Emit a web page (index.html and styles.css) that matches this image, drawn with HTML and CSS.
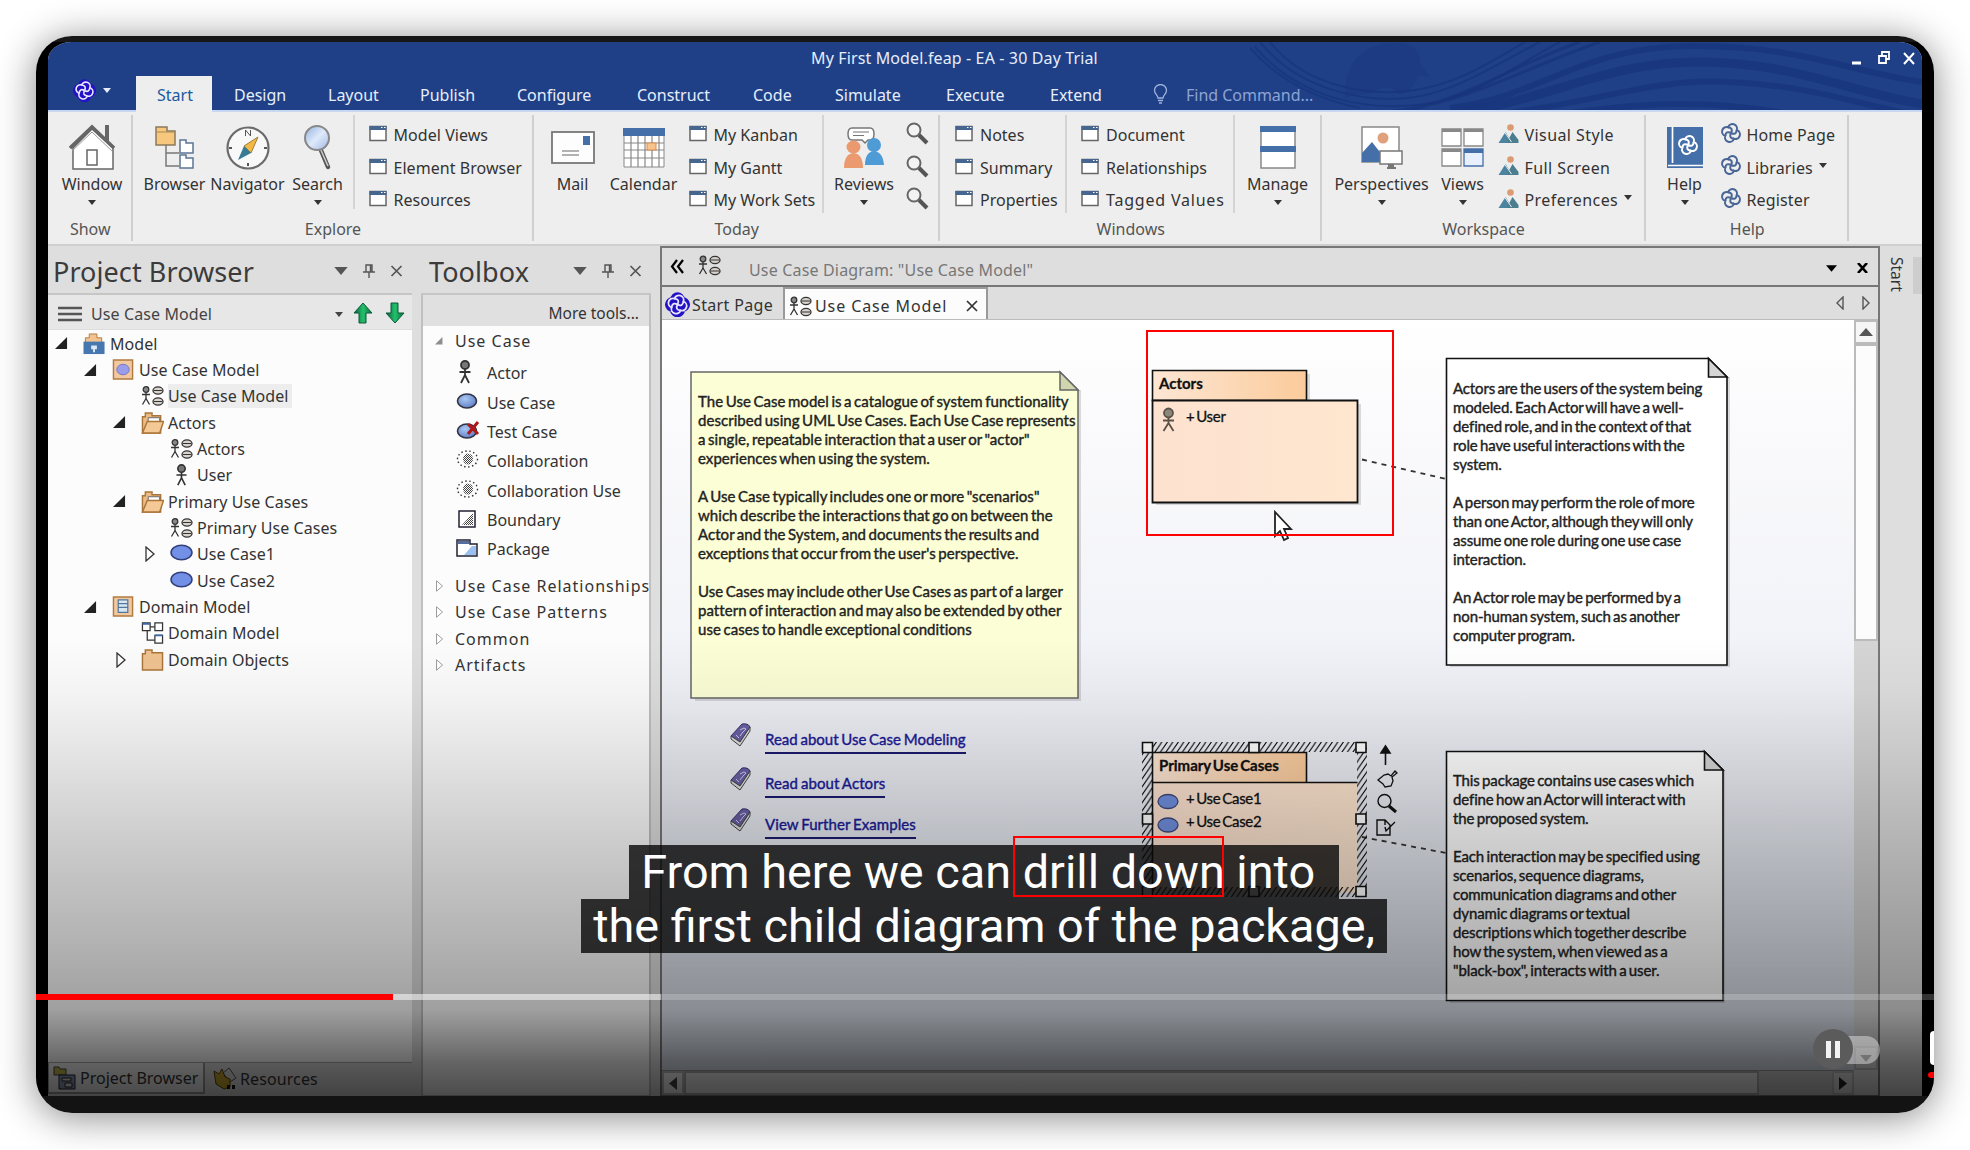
FILE: index.html
```html
<!DOCTYPE html>
<html lang="en">
<head>
<meta charset="utf-8">
<title>My First Model.feap - EA - 30 Day Trial</title>
<link rel="stylesheet" href="styles.css">
</head>
<body>
<svg class="defs" width="0" height="0">
  <defs>
    <linearGradient id="lens" x1="0" y1="0" x2="1" y2="1"><stop offset="0" stop-color="#8fb0e0"/><stop offset=".5" stop-color="#dfeafa"/><stop offset="1" stop-color="#9db8e4"/></linearGradient>
    <linearGradient id="green" x1="0" x2="1"><stop offset="0" stop-color="#0a5a3c"/><stop offset=".5" stop-color="#22c26a"/><stop offset="1" stop-color="#0b6b3c"/></linearGradient>
    <radialGradient id="ball" cx=".4" cy=".35" r=".7"><stop offset="0" stop-color="#a9c8f2"/><stop offset="1" stop-color="#5f7cc6"/></radialGradient>
    <linearGradient id="tabfill" x1="0" x2="1"><stop offset="0" stop-color="#fde6d4"/><stop offset="1" stop-color="#fbcb9b"/></linearGradient>
    <linearGradient id="bodyfill" x1="0" x2="1"><stop offset="0" stop-color="#fde2d0"/><stop offset="1" stop-color="#fee6cf"/></linearGradient>
    <pattern id="hatch" width="5.500" height="8" patternUnits="userSpaceOnUse"><path d="M0 8L5.500 0M-1 1.450L1-1.450M4.500 9.450L6.500 6.550" stroke="#000" stroke-width="1"/></pattern>
    <pattern id="dots" width="2" height="2" patternUnits="userSpaceOnUse"><path d="M0 0h1v1H0zM1 1h1v1H1z" fill="#444"/></pattern>
  </defs>
  <symbol id="swirl" viewBox="0 0 24 24"><g fill="none" stroke="currentColor" stroke-width="2.200"><path d="M7 7a5 5 0 0 1 10 0a5 5 0 0 1 0 10a5 5 0 0 1-10 0a5 5 0 0 1 0-10z"/><path d="M7 7q6-1 5 5M17 7q1 6-5 5M17 17q-6 1-5-5M7 17q-1-6 5-5"/></g></symbol>
  <symbol id="logo" viewBox="0 0 24 24"><path d="M7.500 7a4.500 4.500 0 0 1 9 0a5 5 0 0 1 .5 10a5 5 0 0 1-10 0a5 5 0 0 1 .5-10z" fill="#2413c4" stroke="#2413c4" stroke-width="4.500"/><g fill="none" stroke="#e9e6ff" stroke-width="1.700" transform="rotate(18 12 12)"><path d="M7.500 7.500a4.500 4.500 0 0 1 9 0a4.500 4.500 0 0 1 0 9a4.500 4.500 0 0 1-9 0a4.500 4.500 0 0 1 0-9z"/><path d="M7.500 7.500q5.500-1 4.500 4.500M16.500 7.500q1 5.500-4.500 4.500M16.500 16.500q-5.500 1-4.500-4.500M7.500 16.500q-1-5.500 4.500-4.500"/></g></symbol>
  <symbol id="win" viewBox="0 0 18 16"><rect x="1" y="1" width="16" height="14" fill="#fff" stroke="#666" stroke-width="1.500"/><path d="M.5.5h17v4H.5z" fill="#46658f"/><path d="M12 2h1.500M15 2h1.500" stroke="#fff"/></symbol>
  <symbol id="lensic" viewBox="0 0 24 24"><circle cx="9" cy="8" r="6.500" fill="#f3f3f3" stroke="#666" stroke-width="2"/><path d="M14 13l8 8" stroke="#555" stroke-width="4"/></symbol>
  <symbol id="mount" viewBox="0 0 20 20"><circle cx="12" cy="3.500" r="3.300" fill="#dc9a72"/><path d="M0 19l7-11 5 8V19z" fill="#4a84a0"/><path d="M8 19l6-11 6 8v3z" fill="#4a7e8e"/><path d="M6 8l7 10" stroke="#eee"/></symbol>
  <symbol id="ucd" viewBox="0 0 23 21"><g fill="none" stroke="#333" stroke-width="1.300"><circle cx="5" cy="4" r="2.800" fill="#888"/><path d="M5 7v6M1 9h8M5 13l-3.500 6M5 13l3.500 6"/><ellipse cx="17" cy="5" rx="5" ry="3.600" fill="#d8d2cc"/><ellipse cx="17" cy="16" rx="5" ry="3.600" fill="#d8d2cc"/><path d="M13 5h8M13 16h8" stroke-width="1"/></g></symbol>
  <symbol id="man" viewBox="0 0 14 24"><g fill="none" stroke="#333" stroke-width="1.800"><circle cx="7" cy="5" r="4" fill="#777"/><path d="M7 9v7M1.500 12h11M7 15L3 23M7 15l4 8"/></g></symbol>
  <symbol id="folder" viewBox="0 0 23 23"><path d="M1 22V5h3V1h7v3h9v18z" fill="#edbb84" stroke="#a97539" stroke-width="1.500"/><path d="M7 6h12v8H7z" fill="#fff" stroke="#666"/><path d="M1 22l5-12h17l-4 12z" fill="#f4c995" stroke="#a97539" stroke-width="1.500"/></symbol>
  <symbol id="closed" viewBox="0 0 23 23"><path d="M1 22V5h3V1h7v3h11v18z" fill="#f0c291" stroke="#a97539" stroke-width="1.500"/></symbol>
  <symbol id="open" viewBox="0 0 14 14"><path d="M0 13L13 0v13z" fill="#222"/></symbol>
  <symbol id="shut" viewBox="0 0 10 16"><path d="M1 1v14l8-7z" fill="#fff" stroke="currentColor" stroke-width="1.300"/></symbol>
  <symbol id="oval" viewBox="0 0 22 16"><ellipse cx="11" cy="8" rx="10" ry="7" fill="#7290e6" stroke="#33407c" stroke-width="1.500"/></symbol>
  <symbol id="down" viewBox="0 0 10 6"><path d="M0 0h10L5 6z" fill="currentColor"/></symbol>
  <symbol id="pin" viewBox="0 0 12 14"><path d="M3 1h6v7H3zM0 8h12M6 8v6M7.500 1v7" fill="none" stroke="#555" stroke-width="1.400"/></symbol>
  <symbol id="x" viewBox="0 0 12 12"><path d="M1 1l10 10M11 1L1 11" stroke="currentColor" stroke-width="1.700"/></symbol>
  <symbol id="book" viewBox="0 0 22 24"><path d="M1 13L12 1q6-1 8 3L10 19z" fill="#6a5fa6" stroke="#35306b"/><path d="M1 13v3l9 7L20 8V4L10 19z" fill="#ddd" stroke="#444"/><path d="M10 7l4-2 2 1-3 3-3 4M6 12l3 3" fill="none" stroke="#cfcbe8"/></symbol>
  <symbol id="collab" viewBox="0 0 23 20"><ellipse cx="12" cy="9" rx="5" ry="5.500" fill="url(#dots)"/><ellipse cx="11.500" cy="9" rx="10" ry="8" fill="none" stroke="#333" stroke-width="1.400" stroke-dasharray="1.500 2.500"/></symbol>
</svg>

<div class="player">
<div class="app">
  <header class="titlebar">
    <svg class="waves" width="672" height="68" viewBox="0 0 672 68">
      <g fill="none" stroke="#17327a" stroke-opacity=".65">
        <path stroke-width="2" d="M0 6C30 40 70 58 110 66M10 0C50 50 120 62 165 55S250 20 290 0M20 0C55 45 120 55 165 48S240 20 275 0M5 5C50 58 120 70 175 62S270 20 310 0"/>
        <path stroke-width="3" d="M40 70C170 95 240 30 330 0M80 70C190 80 260 30 350 0"/>
        <path stroke-width="6" d="M200 66C290 55 330 5 440 4S600 30 672 40"/>
        <path stroke-width="9" d="M210 72C320 50 360 20 450 20S600 50 672 62"/>
        <path stroke-width="6" d="M250 72C350 60 400 36 480 40S600 60 660 72M300 74c90-14 160-18 250 0"/>
      </g>
      <path fill="#17327a" fill-opacity=".3" d="M95 55C95 25 105 10 130 3q40-8 40 18l10 14-12-2q-5 16-18 20-10-14-30-2z"/>
    </svg>
    <div class="caption-row"><span class="doc-title">My First Model.feap - EA - 30 Day Trial</span>
      <svg class="winbtns" width="66" height="16" viewBox="0 0 66 16" fill="none" stroke="#fff" stroke-width="1.800"><path d="M1 13h9" stroke-width="3"/><path d="M28 6h7v7h-7zM31 5V2h7v7h-3" /><path d="M53 3l10 11M63 3L53 14" stroke-width="2"/></svg>
    </div>
    <nav class="tabs">
      <span class="appmenu"><svg width="23" height="23"><use href="#logo"/></svg><svg width="8" height="5"><use href="#down"/></svg></span>
      <span class="tab on">Start</span><span>Design</span><span>Layout</span><span>Publish</span><span>Configure</span><span>Construct</span><span>Code</span><span>Simulate</span><span>Execute</span><span>Extend</span>
      <svg width="15" height="20" viewBox="0 0 15 20" fill="none" stroke="#9fb3dc" stroke-width="1.300"><path d="M5 14C5 11 1.500 10 1.500 6.500a6 6 0 0 1 12 0C13.500 10 10 11 10 14zM5 16.500h5M6 19h3"/></svg>
      <span class="find">Find Command...</span>
    </nav>
  </header>

  <section class="ribbon">
    <div class="group"><div class="tools">
      <div class="big w84"><svg width="46" height="48" viewBox="0 0 46 48"><path d="M38 1v20" stroke="#666" stroke-width="4"/><path d="M4 24v21h40V24L23 5z" fill="#fff" stroke="#666" stroke-width="1.500"/><path d="M1 24L23 3l22 21" fill="none" stroke="#666" stroke-width="3.500"/><path d="M3 27L23 8l20 19" fill="none" stroke="#999"/><rect x="18" y="26" width="10" height="15" fill="#fff" stroke="#666" stroke-width="1.500"/></svg><b>Window</b><svg class="dd"><use href="#down"/></svg></div>
    </div><p>Show</p></div>
    <div class="group"><div class="tools">
      <div class="big brw"><svg width="40" height="44" viewBox="0 0 40 44"><path d="M11 18v22h13M11 27h13" fill="none" stroke="#777" stroke-width="1.500"/><path d="M1 5V1h11v4h8v14H1z" fill="#f6c77d" stroke="#8a7a5a" stroke-width="1.500"/><path d="M1 6h19" stroke="#a58b58"/><path d="M25 27V14h6v3h7v10zM25 42V29h6v3h7v10z" fill="#fff" stroke="#5d7595" stroke-width="1.500"/></svg><b>Browser</b></div>
      <div class="big nav"><svg width="44" height="46" viewBox="0 0 44 46"><circle cx="22" cy="23" r="20.500" fill="#f8f8f8" stroke="#6b6b6b" stroke-width="2.200"/><path d="M32 12L18 21l7 7z" fill="#f4b945" stroke="#9b7c39"/><path d="M12 35l6-14 7 7z" fill="#377a94"/><path d="M22 38v3M3 23h3M38 23h3" stroke="#555" stroke-width="2"/><path d="M19.500 11V5l5 6V5" fill="none" stroke="#555"/></svg><b>Navigator</b></div>
      <div class="big sea"><svg width="30" height="46" viewBox="0 0 30 46"><path d="M17 23l8 19" stroke="#555" stroke-width="4.500" stroke-linecap="round"/><path d="M17 23l8 18" stroke="#ccc" stroke-width="1.500"/><ellipse cx="14" cy="13" rx="12" ry="12" fill="url(#lens)" stroke="#888" stroke-width="2"/></svg><b>Search</b><svg class="dd"><use href="#down"/></svg></div>
      <ul class="list l1"><li><svg><use href="#win"/></svg>Model Views</li><li><svg><use href="#win"/></svg>Element Browser</li><li><svg><use href="#win"/></svg>Resources</li></ul>
    </div><p>Explore</p></div>
    <div class="group"><div class="tools">
      <div class="big mail"><svg width="44" height="34" viewBox="0 0 44 34"><rect x="1" y="1" width="42" height="31" fill="#fdfdfd" stroke="#777" stroke-width="1.800"/><path d="M32 5h7v9h-7z" fill="#456fa8"/><path d="M11 20h17M11 24h17" stroke="#999" stroke-width="1.300"/></svg><b>Mail</b></div>
      <div class="big cal"><svg width="42" height="40" viewBox="0 0 42 40"><path d="M1 1h40v38H1z" fill="#fff" stroke="#888"/><path d="M0 0h42v8H0z" fill="#456fa8"/><path d="M8 8v31M15 8v31M22 8v31M29 8v31M36 8v31M1 15h40M1 22h40M1 30h40" stroke="#888" stroke-width="1.200"/><rect x="24" y="15" width="9" height="7" fill="#fbc38c" stroke="#d98d52"/></svg><b>Calendar</b></div>
      <ul class="list l2"><li><svg><use href="#win"/></svg>My Kanban</li><li><svg><use href="#win"/></svg>My Gantt</li><li><svg><use href="#win"/></svg>My Work Sets</li></ul>
      <div class="big rev"><svg width="40" height="42" viewBox="0 0 40 42"><path d="M8 1h18q4 0 4 6t-4 6h-2l-3 3-3-3H8q-4 0-4-6t4-6z" fill="#fff" stroke="#777" stroke-width="1.500"/><path d="M9 5h16M9 8.500h11" stroke="#777"/><ellipse cx="9.500" cy="20" rx="7" ry="6.500" fill="#eb9a70"/><path d="M0 41q0-14 9.500-15Q19 27 19 41z" fill="#eb9a70"/><ellipse cx="30" cy="18" rx="7" ry="7" fill="#4f9bd5"/><path d="M21 38q0-13 9-14 9 1 10 14z" fill="#4f9bd5"/></svg><b>Reviews</b><svg class="dd"><use href="#down"/></svg></div>
      <div class="lenses"><svg><use href="#lensic"/></svg><svg><use href="#lensic"/></svg><svg><use href="#lensic"/></svg></div>
    </div><p>Today</p></div>
    <div class="group"><div class="tools">
      <ul class="list l3"><li><svg><use href="#win"/></svg>Notes</li><li><svg><use href="#win"/></svg>Summary</li><li><svg><use href="#win"/></svg>Properties</li></ul>
      <ul class="list l4"><li><svg><use href="#win"/></svg>Document</li><li><svg><use href="#win"/></svg>Relationships</li><li class="wide"><svg><use href="#win"/></svg>Tagged Values</li></ul>
      <div class="big man"><svg width="36" height="43" viewBox="0 0 36 43"><path d="M1 1h34v41H1z" fill="#fff" stroke="#888" stroke-width="1.500"/><path d="M0 0h36v6H0zM0 20h36v6H0z" fill="#456fa8"/></svg><b>Manage</b><svg class="dd"><use href="#down"/></svg></div>
    </div><p>Windows</p></div>
    <div class="group"><div class="tools">
      <div class="big per"><svg width="42" height="44" viewBox="0 0 42 44"><path d="M1 1h37v35H1z" fill="#fff" stroke="#888" stroke-width="1.500"/><path d="M1 36V27l10-11 11 14v6z" fill="#456fa8"/><circle cx="22" cy="12" r="5.500" fill="#e0a07c"/><path d="M19 25h22v13H19z" fill="#fff" stroke="#777" stroke-width="1.500"/><path d="M27 38h6v3h2v2h-9v-2h1z" fill="#777"/></svg><b>Perspectives</b><svg class="dd"><use href="#down"/></svg></div>
      <div class="big vie"><svg width="44" height="39" viewBox="0 0 44 39"><g fill="#fff" stroke="#888" stroke-width="1.300"><path d="M1 1h19v17H1zM23 1h19v17H23zM1 21h19v17H1z"/></g><path d="M23 21h19v17H23z" fill="#e8effd" stroke="#456fa8" stroke-width="1.300"/><path d="M1 1h19v3H1zM23 1h19v3H23zM1 21h19v3H1z" fill="#888"/><path d="M23 21h19v4H23z" fill="#456fa8"/></svg><b>Views</b><svg class="dd"><use href="#down"/></svg></div>
      <ul class="list l5"><li><svg><use href="#mount"/></svg>Visual Style</li><li><svg><use href="#mount"/></svg>Full Screen</li><li><svg><use href="#mount"/></svg>Preferences<svg class="dd"><use href="#down"/></svg></li></ul>
    </div><p>Workspace</p></div>
    <div class="group"><div class="tools">
      <div class="big hel"><svg width="36" height="41" viewBox="0 0 36 41"><path d="M0 0h36v41H0z" fill="#456fa8"/><path d="M5.500 0v36M1 38.500h35" stroke="#fff" stroke-width="1.700"/><svg x="10" y="7" width="22" height="22" color="#fff"><use href="#swirl" transform="rotate(18 11 11)"/></svg></svg><b>Help</b><svg class="dd"><use href="#down"/></svg></div>
      <ul class="list l6"><li><svg class="tw"><use href="#swirl"/></svg>Home Page</li><li><svg class="tw"><use href="#swirl"/></svg>Libraries<svg class="dd"><use href="#down"/></svg></li><li><svg class="tw"><use href="#swirl"/></svg>Register</li></ul>
    </div><p>Help</p></div>
  </section>

  <main class="work">
    <aside class="browser">
      <h2>Project Browser<span class="tools3"><svg width="14" height="8"><use href="#down"/></svg><svg width="12" height="14"><use href="#pin"/></svg><svg width="13" height="12"><use href="#x"/></svg></span></h2>
      <div class="crumb"><svg width="24" height="16" viewBox="0 0 24 16"><path d="M0 2h24M0 8h24M0 14h24" stroke="#555" stroke-width="2.400"/></svg><span>Use Case Model</span><svg width="8" height="5"><use href="#down"/></svg><svg class="arr" width="20" height="22" viewBox="0 0 20 22"><path d="M10 1L1 11h5v10h7V11h6z" fill="url(#green)" stroke="#0a5a3c"/></svg><svg class="arr" width="20" height="22" viewBox="0 0 20 22"><path d="M10 21L1 11h5V1h7v10h6z" fill="url(#green)" stroke="#0a5a3c"/></svg></div>
      <ul class="tree">
        <li class="d0"><i><svg class="op"><use href="#open"/></svg></i><svg class="ic" viewBox="0 0 23 23"><path d="M2 10V5h4V1h8v4h5v5z" fill="#f2c391" stroke="#b07c3e"/><path d="M0 9h22v13H0z" fill="#4677ae"/><path d="M8 13h6v4H8zM10 17h2v3h-2z" fill="#dce8f5"/></svg>Model</li>
        <li class="d1"><i><svg class="op"><use href="#open"/></svg></i><svg class="ic" viewBox="0 0 23 23"><path d="M1 1h20v20H1z" fill="#f2c8a0" stroke="#b07c3e" stroke-width="1.500"/><ellipse cx="11" cy="11" rx="6.500" ry="5.500" fill="#9a9cec" stroke="#7776bb"/></svg>Use Case Model</li>
        <li class="d2"><i></i><svg class="ic"><use href="#ucd"/></svg><em>Use Case Model</em></li>
        <li class="d2"><i><svg class="op"><use href="#open"/></svg></i><svg class="ic"><use href="#folder"/></svg>Actors</li>
        <li class="d3"><i></i><svg class="ic"><use href="#ucd"/></svg>Actors</li>
        <li class="d3"><i></i><svg class="ic"><use href="#man"/></svg>User</li>
        <li class="d2"><i><svg class="op"><use href="#open"/></svg></i><svg class="ic"><use href="#folder"/></svg>Primary Use Cases</li>
        <li class="d3"><i></i><svg class="ic"><use href="#ucd"/></svg>Primary Use Cases</li>
        <li class="d3"><i><svg class="sh"><use href="#shut"/></svg></i><svg class="ic up"><use href="#oval"/></svg>Use Case1</li>
        <li class="d3"><i></i><svg class="ic up"><use href="#oval"/></svg>Use Case2</li>
        <li class="d1"><i><svg class="op"><use href="#open"/></svg></i><svg class="ic" viewBox="0 0 23 23"><path d="M1 1h20v20H1z" fill="#f2c8a0" stroke="#b07c3e" stroke-width="1.500"/><path d="M6 4h10v13H6zM6 8h10M6 12h10" fill="#d8e6f4" stroke="#53789c" stroke-width="1.300"/></svg>Domain Model</li>
        <li class="d2"><i></i><svg class="ic" viewBox="0 0 23 23"><g fill="#fff" stroke="#333" stroke-width="1.300"><path d="M6 9v10h8M9 5h5" fill="none"/><path d="M1 1h8v8H1zM14 1h8v8h-8zM14 14h8v8h-8z"/></g><path d="M1 1h8v2H1zM14 13h8v2h-8z" fill="#3a66ac"/></svg>Domain Model</li>
        <li class="d2"><i><svg class="sh"><use href="#shut"/></svg></i><svg class="ic"><use href="#closed"/></svg>Domain Objects</li>
      </ul>
      <div class="btabs">
        <span class="on"><svg width="24" height="24" viewBox="0 0 24 24"><path d="M8 8v12h6M1 9V1h5l1 2h6v6z" fill="#c8b848" stroke="#444"/><path d="M6 9h16v14H6z" fill="#8899b8" stroke="#223" /><path d="M9 12h9v3H9zM12 17h7v4h-7z" fill="#ddd" stroke="#222"/></svg>Project Browser</span>
        <span><svg width="24" height="24" viewBox="0 0 24 24"><path d="M10 6l6-5 7 10-6 4z" fill="#ddd" stroke="#555"/><path d="M1 4l5 3 3-5 3 8 5 2v8l-6 2-8-5z" fill="#c9a62c" stroke="#554810"/><path d="M14 22v-4h3v4zM19 22v-4h3v4z" fill="#111"/></svg>Resources</span>
      </div>
    </aside>

    <aside class="toolbox">
      <h2>Toolbox<span class="tools3"><svg width="14" height="8"><use href="#down"/></svg><svg width="12" height="14"><use href="#pin"/></svg><svg width="13" height="12"><use href="#x"/></svg></span></h2>
      <div class="box">
        <div class="more">More tools...</div>
        <div class="sec"><svg class="sop"><use href="#open"/></svg>Use Case</div>
        <ul>
          <li><svg width="22" height="24"><use href="#man"/></svg>Actor</li>
          <li><svg width="22" height="18" viewBox="0 0 22 18"><ellipse cx="11" cy="8" rx="9.500" ry="7" fill="url(#ball)" stroke="#334" stroke-width="1.600"/></svg>Use Case</li>
          <li><svg width="24" height="20" viewBox="0 0 24 20"><ellipse cx="11" cy="10" rx="9.500" ry="7" fill="url(#ball)" stroke="#334" stroke-width="1.600"/><path d="M12 3l10 10M22 1L12 13" stroke="#b01818" stroke-width="3"/></svg>Test Case</li>
          <li><svg width="23" height="20"><use href="#collab"/></svg>Collaboration</li>
          <li><svg width="23" height="20"><use href="#collab"/></svg>Collaboration Use</li>
          <li><svg width="22" height="18" viewBox="0 0 22 18"><path d="M3 1h16v16H3z" fill="#fff" stroke="#223" stroke-width="1.500"/><path d="M6 15L17 3v12z" fill="url(#dots)"/></svg>Boundary</li>
          <li><svg width="22" height="18" viewBox="0 0 22 18"><path d="M1 1h13v4h7v12H1z" fill="#fff" stroke="#223" stroke-width="1.500"/><path d="M2 2h11v3H2z" fill="#556c9c"/><path d="M8 16l8-9h4v9z" fill="#9bc0f0"/></svg>Package</li>
        </ul>
        <div class="sec first"><svg class="ssh"><use href="#shut"/></svg>Use Case Relationships</div>
        <div class="sec"><svg class="ssh"><use href="#shut"/></svg>Use Case Patterns</div>
        <div class="sec"><svg class="ssh"><use href="#shut"/></svg>Common</div>
        <div class="sec"><svg class="ssh"><use href="#shut"/></svg>Artifacts</div>
      </div>
    </aside>

    <section class="diagram">
      <div class="dhead"><svg width="15" height="15" viewBox="0 0 15 15" fill="none" stroke="#000" stroke-width="2.200"><path d="M7 1L2 7.500 7 14M13 1L8 7.500l5 6.500"/></svg><svg class="u" width="23" height="21"><use href="#ucd"/></svg><span>Use Case Diagram: "Use Case Model"</span><svg class="r" width="11" height="7"><use href="#down"/></svg><svg class="rx" width="11" height="10" viewBox="0 0 11 10"><path d="M1 0l9 10M10 0L1 10" stroke="#000" stroke-width="2.600"/></svg></div>
      <div class="dtabs"><span class="sp"><svg width="25" height="25"><use href="#logo"/></svg>Start Page</span><span class="um"><svg width="23" height="21"><use href="#ucd"/></svg>Use Case Model<svg class="cx" width="12" height="12"><use href="#x"/></svg></span><svg class="lr" width="34" height="14" viewBox="0 0 34 14" fill="none" stroke="#555" stroke-width="1.400"><path d="M7 1v12L1 7zM27 1v12l6-6z"/></svg></div>
      <div class="canvas">
        <svg class="shapes" width="1195" height="752" viewBox="662 320 1195 752">
          <g fill="#000" fill-opacity=".13"><path d="M695 390h386v311H695zM1156 404h205v101h-205zM1450 377h280v290h-280zM1450 770h275v233h-275zM1307 374h3v27h-3z"/></g>
          <path d="M691 372h369l18 18v308H691z" fill="#fcfed5" stroke="#666" stroke-width="1.500"/><path d="M1060 372v18h18z" fill="#d0d5ae" stroke="#666" stroke-width="1.500"/>
          <path d="M1152.500 370.500h154v30h-154z" fill="url(#tabfill)" stroke="#111" stroke-width="1.600"/><path d="M1152.500 400.500h205v102h-205z" fill="url(#bodyfill)" stroke="#111" stroke-width="1.800"/>
          <path d="M1362 459.500l84 19.500M1362 837l84 16" stroke="#333" stroke-width="1.800" stroke-dasharray="5 5"/>
          <path d="M1446.500 358.500h262l18.500 18.500v288h-280.500z" fill="#fff" stroke="#111" stroke-width="1.600"/><path d="M1708.500 358.500v18.500h18.500z" fill="#d5d5d5" stroke="#111" stroke-width="1.600"/>
          <path d="M1446.500 751.500h258l18.500 18.500v230.500h-276.500z" fill="#fff" stroke="#111" stroke-width="1.600"/><path d="M1704.500 751.500v18.500h18.500z" fill="#d5d5d5" stroke="#111" stroke-width="1.600"/>
          <path d="M1152.500 752.500h154v30h-154z" fill="url(#tabfill)"/><path d="M1152.500 782.500h205v110h-205z" fill="url(#bodyfill)"/><path d="M1152.500 892V752.500h154v30M1152.500 782.500h205" fill="none" stroke="#111" stroke-width="1.600"/>
          <path d="M1142 742h225v155h-225zM1152 752v135h205V752z" fill="url(#hatch)" fill-rule="evenodd"/>
          <g fill="#fff" stroke="#111" stroke-width="1.600"><path d="M1142.500 742.500h10v10h-10zM1249 742.500h10v10h-10zM1356 742.500h10v10h-10zM1142.500 814h10v10h-10zM1356 814h10v10h-10zM1142.500 886.500h10v10h-10zM1249 886.500h10v10h-10zM1356 886.500h10v10h-10z"/></g>
          <g fill="#718fdf" stroke="#3d4878" stroke-width="1.300"><ellipse cx="1168" cy="801.500" rx="10" ry="7"/><ellipse cx="1168" cy="825" rx="10" ry="7"/></g>
          <g fill="none" stroke="#5a5248" stroke-width="1.800"><circle cx="1168.500" cy="413" r="4.500" fill="#8c877c"/><path d="M1168.500 418v6M1163 420.500h11M1168.500 423l-5 8M1168.500 423l5 8"/></g>
          <g fill="none" stroke="#111" stroke-width="1.600"><path d="M1385.500 765V751"/><path d="M1381 753l4.500-7 4.500 7z" fill="#111"/><path d="M1378 780l6-5 4-1 3 2 4-5 2 2-5 4 1 4-2 5-6 1-2-3z" stroke-width="1.300"/><circle cx="1384.500" cy="801" r="6.500" stroke-width="1.400"/><path d="M1389 806l7 6" stroke-width="3"/><path d="M1377 820h8l5 5v10h-13zM1385 820v5M1395 822l-9 9-1-4" stroke-width="1.400"/></g>
        </svg>
        <div class="note n1">The Use Case model is a catalogue of system functionality<br>described using UML Use Cases. Each Use Case represents<br>a single, repeatable interaction that a user or "actor"<br>experiences when using the system.<br><br>A Use Case typically includes one or more "scenarios"<br>which describe the interactions that go on between the<br>Actor and the System, and documents the results and<br>exceptions that occur from the user's perspective.<br><br>Use Cases may include other Use Cases as part of a larger<br>pattern of interaction and may also be extended by other<br>use cases to handle exceptional conditions</div>
        <div class="note n2">Actors are the users of the system being<br>modeled. Each Actor will have a well-<br>defined role, and in the context of that<br>role have useful interactions with the<br>system.<br><br>A person may perform the role of more<br>than one Actor, although they will only<br>assume one role during one use case<br>interaction.<br><br>An Actor role may be performed by a<br>non-human system, such as another<br>computer program.</div>
        <div class="note n3">This package contains use cases which<br>define how an Actor will interact with<br>the proposed system.<br><br>Each interaction may be specified using<br>scenarios, sequence diagrams,<br>communication diagrams and other<br>dynamic diagrams or textual<br>descriptions which together describe<br>how the system, when viewed as a<br>"black-box", interacts with a user.</div>
        <strong class="pk p1">Actors</strong><span class="pk m1">+ User</span>
        <strong class="pk p2">Primary Use Cases</strong><span class="pk m2">+ Use Case1</span><span class="pk m3">+ Use Case2</span>
        <a class="lk k1"><svg width="22" height="24"><use href="#book"/></svg><span>Read about Use Case Modeling</span></a>
        <a class="lk k2"><svg width="22" height="24"><use href="#book"/></svg><span>Read about Actors</span></a>
        <a class="lk k3"><svg width="22" height="24"><use href="#book"/></svg><span>View Further Examples</span></a>
      </div>
      <div class="vbar"><i><svg width="14" height="8" viewBox="0 0 14 8"><path d="M0 8l7-8 7 8z" fill="#555"/></svg></i><b></b><i class="end"><svg width="12" height="7"><use href="#down"/></svg></i></div>
      <div class="hbar"><i><svg width="8" height="13" viewBox="0 0 8 13"><path d="M8 0v13L0 6.500z" fill="#444"/></svg></i><b></b><i class="end"><svg width="8" height="13" viewBox="0 0 8 13"><path d="M0 0v13l8-6.500z" fill="#222"/></svg></i></div>
    </section>
    <aside class="strip"><span>Start</span><i></i></aside>
  </main>
</div>
<div class="shade"></div>
<svg class="cursor" width="22" height="32" viewBox="0 0 22 32"><path d="M2 2v24l5-5 4 9 4-2-4-9h7z" fill="#fff" stroke="#222" stroke-width="1.800"/></svg>
<div class="progress"><i class="played"></i><i class="loaded"></i></div>
<div class="toggle"><i></i><svg width="40" height="40" viewBox="0 0 40 40"><circle cx="20" cy="20" r="20" fill="#5b5b5b"/><path d="M13 12h5v17h-5zM22 12h5v17h-5z" fill="#f2f2f2"/></svg></div>
<i class="edge"></i><i class="edge dot"></i>
<div class="subs"><span>From here we can drill down into&nbsp;</span><span>the first child diagram of the package,</span></div>
<div class="mark a"></div><div class="mark b"></div>
</div>
</body>
</html>
```
FILE: styles.css
```css
* { box-sizing: border-box; }
body { margin: 0; width: 1970px; height: 1150px; overflow: hidden; background: #fff; padding: 36px; font: 16px/20px "Noto Sans", sans-serif; color: #333; }
svg { flex: none; display: block; }
.defs { position: absolute; }
ul, p, h2 { margin: 0; padding: 0; list-style: none; }
i, em { font-style: normal; }

.player { position: relative; width: 1898px; height: 1077px; border-radius: 36px; background: linear-gradient(#171717 0 6px, #000 6px 1060px, #131313 1060px); padding: 6px 12px 17px; box-shadow: 0 4px 38px rgba(0,0,0,.48); clip-path: inset(-36px); }
.app { height: 1054px; display: flex; flex-direction: column; background: #dedede; overflow: hidden; border-radius: 24px 24px 0 0 / 18px 18px 0 0; }

.titlebar { height: 70px; flex: none; background: #1f4086; color: #e6eefc; position: relative; border-bottom: 2px solid #c9d8f2; }
.waves { position: absolute; right: 0; top: 0; }
.caption-row { height: 34px; display: flex; align-items: center; padding-left: 763px; position: relative; }
.doc-title { letter-spacing: .13px; width: 1000px; margin-top: -2px; }
.winbtns { margin-left: 40px; margin-top: -3px; }
.tabs { position: relative; height: 36px; display: grid; grid-template-columns: 88px 98px 94px 92px 97px 120px 116px 82px 111px 104px 103px 33px auto; align-items: center; }
.tabs > span { margin-top: 0; }
.tabs > svg { margin-top: -2px; }
.tabs > .appmenu { display: flex; align-items: center; gap: 7px; padding-left: 25px; margin-top: -9px; }
.tabs > .tab { background: #eeeeee; color: #1c5a9c; width: 76px; height: 38px; margin: 0; padding: 9px 0 0 21px; }
.find { color: #8ea4d4; letter-spacing: -.02px; }

.ribbon { height: 134px; flex: none; display: grid; grid-template-columns: 84.500px 401px 406.500px 381.500px 324px 203.500px; background: #eeeeee; border-bottom: 2px solid #cfcfcf; padding-top: 3px; }
.group { border-right: 2px solid #cfcfcf; height: 126px; display: flex; flex-direction: column; }
.group p { text-align: center; color: #555; margin-top: auto; padding-bottom: 2px; padding-left: 2px; }
.tools { display: flex; height: 98px; }
.big { display: flex; flex-direction: column; align-items: center; position: relative; flex: none; padding-top: 6px; }
.big > svg:first-child { margin: auto 0; }
.big b { font-weight: 400; white-space: nowrap; height: 20px; margin-bottom: 19px; order: 2; }
.dd { width: 8px; height: 5px; }
.big .dd { position: absolute; bottom: 8px; }
.w84 { width: 88px; }
.brw { width: 60px; margin-left: 12px; } .nav { width: 76px; margin-left: 5px; } .sea { width: 54px; margin-left: 5px; }
.list { display: flex; flex-direction: column; gap: 12.500px; padding-top: 10px; white-space: nowrap; flex: none; }
.list li { display: flex; align-items: center; height: 20px; }
.list li > svg:first-child { width: 18px; height: 17px; margin-right: 7px; margin-top: -3px; }
.list .dd { margin: -5px 0 0 6px; }
.l1 { border-left: 2px solid #d4d4d4; margin-left: 8px; padding-left: 14px; height: 94px; letter-spacing: .05px; }
.mail { width: 40px; margin-left: 19px; } .cal { width: 72px; margin-left: 15px; }
.l2 { margin-left: 9px; width: 133px; }
.rev { width: 83px; border-left: 2px solid #d4d4d4; }
.lenses { display: flex; flex-direction: column; gap: 8.500px; padding-top: 7px; }
.lenses svg { width: 24px; height: 24px; }
.l3 { margin-left: 15px; width: 112px; border-right: 2px solid #d4d4d4; }
.l4 { padding-left: 14px; width: 168px; border-right: 2px solid #d4d4d4; letter-spacing: .02px; }
.wide { letter-spacing: .8px; }
.man { width: 85px; }
.per { width: 96px; margin-left: 12px; } .vie { width: 46px; margin-left: 10px; }
.l5 { margin-left: 12px; letter-spacing: .42px; } .l5 li > svg:first-child { width: 21px; height: 20px; margin-right: 6px; }
.hel { width: 38px; margin-left: 20px; }
.l6 { margin-left: 16px; letter-spacing: .15px; } .l6 li > svg:first-child { width: 22px; height: 22px; margin-right: 5px; color: #4a6697; margin-top: -5px; }
.tw { transform: rotate(18deg); }

.work { flex: 1; display: grid; grid-template-columns: 364px 9px 230px 9px 1220px 42px; }
.browser { display: flex; flex-direction: column; grid-column: 1; min-height: 0; }
h2 { font: 400 27px/52px "Noto Sans", sans-serif; height: 49px; padding-left: 5px; display: flex; letter-spacing: .08px; color: #3b3b3b; border-bottom: 2px solid #c6c6c6; }
.toolbox h2 { padding-left: 8px; }
.tools3 { margin-left: auto; display: flex; align-items: center; gap: 15px; color: #555; padding: 3px 9px 0 0; }
.crumb { height: 35px; background: #e7e7e7; border-bottom: 1px solid #ddd; display: flex; align-items: center; padding: 4px 0 0 10px; color: #444; }
.crumb span { margin-left: 9px; width: 244px; letter-spacing: .1px; }
.crumb .arr { margin: -3px 0 0 10px; } .crumb .arr + .arr { margin-left: 12px; }
.tree { background: #fcfcfc; flex: 1; padding-top: .5px; }
.tree li { height: 26.350px; display: flex; align-items: center; white-space: nowrap; line-height: 24px; letter-spacing: .06px; }
.tree i { width: 28px; flex: none; }
.tree .ic { width: 23px; height: 22px; margin-right: 4px; } .tree .up { height: 17px; margin-top: -3px; }
.op { width: 13px; height: 13px; } .sh { width: 10px; height: 16px; margin-left: 3px; }
.d0 { padding-left: 7px; } .d1 { padding-left: 36px; } .d2 { padding-left: 65px; } .d3 { padding-left: 94px; }
.tree em { background: #ededed; padding-right: 3px; }
.btabs { height: 34px; display: flex; border-top: 1px solid #aaa; white-space: nowrap; }
.btabs span { display: flex; align-items: center; height: 31px; padding: 0 8px 0 8px; gap: 3px; letter-spacing: .1px; }
.btabs .on { background: #f4f4f4; border: solid #999; border-width: 0 2px 2px 1px; width: 157px; padding: 0 0 0 4px; letter-spacing: 0; }

.toolbox { grid-column: 3; display: flex; flex-direction: column; overflow: hidden; }
.box { flex: 1; border: 2px solid #c0c0c0; border-bottom-width: 1px; background: #fcfcfc; border-top: 0; overflow: hidden; }
.more { height: 31px; background: #e0e0e0; text-align: right; padding: 8px 10px 0 0; font-size: 15.500px; }
.sec { height: 26.350px; display: flex; align-items: center; padding-left: 12px; letter-spacing: 1px; white-space: nowrap; }
.box > .more + .sec { height: 29.500px; }
.sop { width: 8px; height: 8px; opacity: .5; } .ssh { width: 9px; height: 12px; color: #999; }
.sec svg { margin-right: 12px; } .sec .ssh { margin-right: 11px; }
.box ul { padding-top: 3px; }
.box li { height: 29.350px; display: grid; grid-template-columns: 64px auto; align-items: center; }
.box li svg { margin: -2px 0 0 33px; }
.box li:first-child svg { margin-left: 31px; }
.sec.first { margin-top: 9px; }

.diagram { grid-column: 5; display: grid; grid-template: 39px 33px 1fr 25px / 1fr 24px; border: 2px solid #777; border-width: 2px 2px 1px; }
.dhead { grid-column: 1 / 3; border-bottom: 2px solid #777; display: flex; align-items: center; color: #777; padding-left: 8px; }
.dhead span { padding-top: 7px; letter-spacing: .17px; }
.dhead .u { margin: -3px 28px 0 13px; } .dhead .r { margin: 3px 0 0 auto; color: #000; } .dhead .rx { margin: 3px 10px 0 20px; }
.dtabs { grid-column: 1 / 3; display: flex; align-items: center; border-bottom: 1px solid #bbb; }
.sp { width: 121px; display: flex; align-items: center; gap: 2px; padding: 3px 0 0 3px; white-space: nowrap; letter-spacing: .35px; }
.um { width: 205px; height: 32px; background: #fcfcfc; border: 2px solid #999; border-bottom: 0; display: flex; align-items: center; gap: 3px; padding: 4px 0 0 4px; letter-spacing: .9px; white-space: nowrap; align-self: flex-end; }
.cx { margin-left: 16px; } .lr { margin: 0 8px 0 auto; }
.canvas { position: relative; background: linear-gradient(#fff, #fafafc 15%, #f0f1f7 50%, #d6dce6); overflow: hidden; }
.shapes { position: absolute; left: 0; top: 0; }
.note, .pk, .lk { position: absolute; white-space: nowrap; font-family: Lato, sans-serif; }
.note { font-size: 15px; line-height: 19px; color: #222; word-spacing: -1.400px; -webkit-text-stroke: .4px; }
.n1 { left: 36px; top: 72px; letter-spacing: .05px; } .n2 { left: 791px; top: 59px; letter-spacing: -.12px; } .n3 { left: 791px; top: 451px; letter-spacing: -.12px; }
.pk { font-size: 15px; line-height: 20px; color: #111; word-spacing: -1.700px; -webkit-text-stroke: .3px; }
.p1 { left: 497px; top: 53px; } .m1 { left: 524px; top: 86px; } .p2 { left: 497px; top: 435px; } .m2 { left: 524px; top: 468px; } .m3 { left: 524px; top: 491px; }
.m1, .m2, .m3 { letter-spacing: -.3px; }
.lk { left: 68px; display: flex; gap: 13px; color: #1b1b96; font-size: 15px; word-spacing: -1.100px; -webkit-text-stroke: .4px; }
.lk span { border-bottom: 2px solid #1b1b70; height: 31px; padding-top: 6px; }
.k1 { top: 403px; } .k2 { top: 447px; letter-spacing: .1px; } .k3 { top: 488px; letter-spacing: .07px; }
.vbar { background: #d5d5d5; display: flex; flex-direction: column; }
.vbar i, .hbar i { background: #f6f6f6; border: 2px solid #bbb; height: 24px; display: grid; place-items: center; }
.vbar b { height: 297px; background: #fcfcfc; border: 2px solid #bbb; }
.vbar .end { margin-top: auto; background: #ddd; }
.hbar { display: flex; background: #ccc; border-top: 1px solid #999; } .hbar i { width: 22px; } .hbar b { width: 1075px; background: #ececec; border: 2px solid #aaa; } .hbar .end { margin-left: auto; background: #ddd; }
.strip { grid-column: 6; display: flex; padding-top: 11px; } .strip span { writing-mode: vertical-rl; width: 20px; margin-left: 7px; font-size: 15.500px; } .strip i { margin-left: auto; width: 9px; height: 37px; background: #cdcdcd; }

.shade { position: absolute; inset: 0; border-radius: 36px; background: linear-gradient(transparent 600px, rgba(0,0,0,.03) 654px, rgba(0,0,0,.1) 724px, rgba(0,0,0,.2) 814px, rgba(0,0,0,.29) 904px, rgba(0,0,0,.37) 974px, rgba(0,0,0,.5) 1004px, rgba(0,0,0,.6) 1026px, rgba(0,0,0,.7) 1060px, transparent 1060px); }
.cursor { position: absolute; left: 1237px; top: 474px; }
.progress { position: absolute; left: 0; right: 0; top: 958px; height: 6px; background: rgba(255,255,255,.2); display: flex; }
.played { width: 357px; background: #f00; } .loaded { width: 268px; background: rgba(255,255,255,.42); }
.toggle { position: absolute; left: 1777px; top: 993px; }
.toggle i { position: absolute; left: 20px; top: 7px; width: 47px; height: 28px; border-radius: 14px; background: rgba(255,255,255,.4); } .toggle svg { position: relative; }
.edge { position: absolute; right: 0; top: 995px; width: 4px; height: 34px; background: #fff; border-radius: 4px 0 0 4px; } .dot { top: 1036px; width: 6px; height: 6px; background: #f00; }
.subs { position: absolute; left: 545px; top: 809px; width: 806px; display: flex; flex-direction: column; align-items: center; font: 46.800px/54px Roboto, sans-serif; color: #fff; }
.subs span { background: rgba(8,8,8,.8); white-space: nowrap; height: 54px; padding: 0 12px; }
.mark { position: absolute; border: 2px solid #f00; } .mark.a { left: 1110px; top: 294px; width: 248px; height: 206px; } .mark.b { left: 977px; top: 800px; width: 211px; height: 61px; }
```
